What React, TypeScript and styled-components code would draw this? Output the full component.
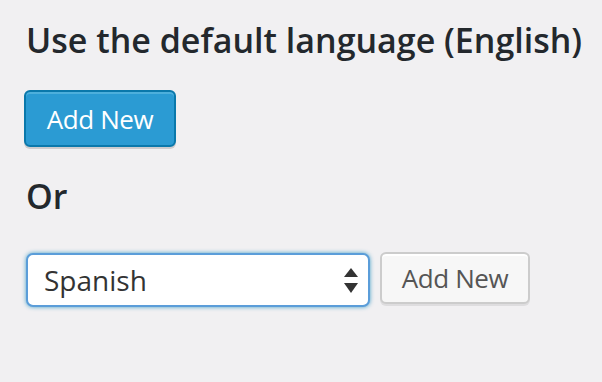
import React from "react";
import styled, { createGlobalStyle } from "styled-components";

const Global = createGlobalStyle`
  html, body { margin: 0; padding: 0; background: #f1f0f2; }
  body { font-family: "Open Sans", "Liberation Sans", sans-serif; color: #222; }
`;

const Page = styled.div`
  width: 602px;
  height: 382px;
  box-sizing: border-box;
  padding: 18px 0 0 24px;
  display: flex;
  flex-direction: column;
  align-items: flex-start;
`;

const Heading = styled.h3`
  margin: 0 0 0 2px;
  font-size: 34px;
  font-weight: 600;
  line-height: 44px;
  color: #23282d;
  white-space: nowrap;
`;

const Button = styled.button<{ $primary?: boolean }>`
  box-sizing: border-box;
  font-family: "Open Sans", "Liberation Sans", sans-serif;
  font-size: 26px;
  letter-spacing: -0.4px;
  line-height: 1;
  white-space: nowrap;
  padding: 0;
  border-radius: 6px;
  border: 2px solid ${(p) => (p.$primary ? "#0a78ab" : "#cccccc")};
  background: ${(p) => (p.$primary ? "#2b9bd3" : "#f7f7f7")};
  color: ${(p) => (p.$primary ? "#ffffff" : "#555555")};
  box-shadow: ${(p) =>
    p.$primary
      ? "inset 0 2px 0 rgba(120,200,230,0.45), 0 2px 0 rgba(0,0,0,0.15)"
      : "inset 0 2px 0 #ffffff, 0 2px 0 rgba(0,0,0,0.08)"};
  cursor: pointer;
`;

const PrimaryButton = styled(Button)`
  margin-top: 28px;
  width: 152px;
  height: 57px;
`;

const OrHeading = styled(Heading)`
  margin-top: 27px;
`;

const Row = styled.div`
  margin-top: 35px;
  display: flex;
  align-items: center;
  gap: 10px;
`;

const SelectWrap = styled.div`
  position: relative;
  margin-left: 2px;
  width: 344px;
  height: 54px;
`;

const Select = styled.select`
  appearance: none;
  -webkit-appearance: none;
  box-sizing: border-box;
  width: 100%;
  height: 100%;
  border: 2px solid #5b9dd9;
  border-radius: 7px;
  background: #ffffff;
  box-shadow: 0 0 4px rgba(30, 140, 190, 0.8);
  font-family: "Open Sans", "Liberation Sans", sans-serif;
  font-size: 28px;
  color: #333333;
  padding: 0 0 0 16px;
  outline: none;
`;

const Arrows = styled.svg`
  position: absolute;
  right: 12px;
  top: 15px;
  pointer-events: none;
`;

const SecondaryButton = styled(Button)`
  width: 150px;
  height: 52px;
  margin-top: -4px;
`;

export default function App() {
  return (
    <>
      <Global />
      <Page>
        <Heading>Use the default language (English)</Heading>
        <PrimaryButton $primary>Add New</PrimaryButton>
        <OrHeading>Or</OrHeading>
        <Row>
          <SelectWrap>
            <Select defaultValue="es">
              <option value="es">Spanish</option>
            </Select>
            <Arrows width="14" height="25" viewBox="0 0 14 25">
              <path d="M7 0 L14 9 L0 9 Z" fill="#333" />
              <path d="M0 15 L14 15 L7 25 Z" fill="#333" />
            </Arrows>
          </SelectWrap>
          <SecondaryButton>Add New</SecondaryButton>
        </Row>
      </Page>
    </>
  );
}
